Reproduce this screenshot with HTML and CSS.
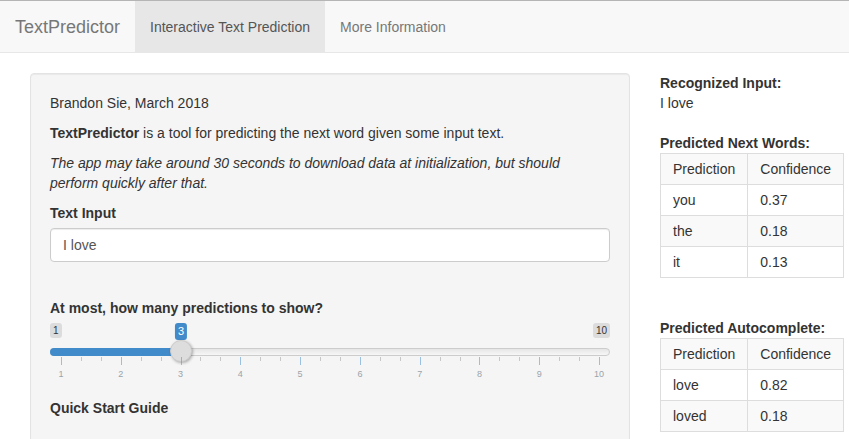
FILE: index.html
```html
<!DOCTYPE html>
<html lang="en">
<head>
<meta charset="utf-8">
<title>TextPredictor</title>
<link rel="stylesheet" href="styles.css">
</head>
<body>
<nav class="navbar">
  <span class="brand">TextPredictor</span>
  <ul class="nav">
    <li class="active"><a>Interactive Text Prediction</a></li>
    <li><a>More Information</a></li>
  </ul>
</nav>
<div class="main">
  <div class="well">
    <p>Brandon Sie, March 2018</p>
    <p><strong>TextPredictor</strong> is a tool for predicting the next word given some input text.</p>
    <p><em>The app may take around 30 seconds to download data at initialization, but should perform quickly after that.</em></p>
    <div class="form-group text-group">
      <label class="control-label">Text Input</label>
      <input class="form-control" type="text" value="I love">
    </div>
    <div class="form-group slider-group">
      <label class="control-label">At most, how many predictions to show?</label>
      <div class="irs">
        <span class="irs-line"></span>
        <span class="irs-bar" style="width:131px"></span>
        <span class="irs-min">1</span>
        <span class="irs-max">10</span>
        <span class="irs-single" style="left:131px">3</span>
        <span class="irs-handle" style="left:120px"></span>
        <div class="irs-grid">
          <span class="pol" style="left:0%"></span>
          <span class="pol small" style="left:3.704%"></span>
          <span class="pol small" style="left:7.407%"></span>
          <span class="pol" style="left:11.111%"></span>
          <span class="pol small" style="left:14.815%"></span>
          <span class="pol small" style="left:18.519%"></span>
          <span class="pol" style="left:22.222%"></span>
          <span class="pol small" style="left:25.926%"></span>
          <span class="pol small" style="left:29.630%"></span>
          <span class="pol" style="left:33.333%"></span>
          <span class="pol small" style="left:37.037%"></span>
          <span class="pol small" style="left:40.741%"></span>
          <span class="pol" style="left:44.444%"></span>
          <span class="pol small" style="left:48.148%"></span>
          <span class="pol small" style="left:51.852%"></span>
          <span class="pol" style="left:55.556%"></span>
          <span class="pol small" style="left:59.259%"></span>
          <span class="pol small" style="left:62.963%"></span>
          <span class="pol" style="left:66.667%"></span>
          <span class="pol small" style="left:70.370%"></span>
          <span class="pol small" style="left:74.074%"></span>
          <span class="pol" style="left:77.778%"></span>
          <span class="pol small" style="left:81.481%"></span>
          <span class="pol small" style="left:85.185%"></span>
          <span class="pol" style="left:88.889%"></span>
          <span class="pol small" style="left:92.593%"></span>
          <span class="pol small" style="left:96.296%"></span>
          <span class="pol" style="left:100%"></span>
          <span class="gtext" style="left:0%">1</span>
          <span class="gtext" style="left:11.111%">2</span>
          <span class="gtext" style="left:22.222%">3</span>
          <span class="gtext" style="left:33.333%">4</span>
          <span class="gtext" style="left:44.444%">5</span>
          <span class="gtext" style="left:55.556%">6</span>
          <span class="gtext" style="left:66.667%">7</span>
          <span class="gtext" style="left:77.778%">8</span>
          <span class="gtext" style="left:88.889%">9</span>
          <span class="gtext" style="left:100%">10</span>
        </div>
      </div>
    </div>
    <h5 class="guide">Quick Start Guide</h5>
  </div>
  <div class="results">
    <div class="res-label">Recognized Input:</div>
    <div class="res-value">I love</div>
    <div class="res-label table-head">Predicted Next Words:</div>
    <table class="ptable">
      <tr class="striped"><th>Prediction</th><th>Confidence</th></tr>
      <tr><td>you</td><td>0.37</td></tr>
      <tr class="striped"><td>the</td><td>0.18</td></tr>
      <tr><td>it</td><td>0.13</td></tr>
    </table>
    <div class="res-label table-head second">Predicted Autocomplete:</div>
    <table class="ptable">
      <tr class="striped"><th>Prediction</th><th>Confidence</th></tr>
      <tr><td>love</td><td>0.82</td></tr>
      <tr class="striped"><td>loved</td><td>0.18</td></tr>
    </table>
  </div>
</div>
</body>
</html>
```
FILE: styles.css
```css
html, body {
  overflow: hidden;
}
* { box-sizing: border-box; }
body {
  margin: 0;
  font-family: "Liberation Sans", Arial, Helvetica, sans-serif;
  font-size: 14px;
  line-height: 20px;
  color: #333;
  background: #fff;
  border-top: 1px solid #b5b5b5;
}
.navbar {
  display: flex;
  align-items: stretch;
  height: 52px;
  background: #f8f8f8;
  border-bottom: 1px solid #e7e7e7;
  margin-bottom: 20px;
}
.brand {
  font-size: 18px;
  line-height: 20px;
  color: #777;
  padding: 16px 15px 15px 15px;
  width: 135px;
}
.nav {
  display: flex;
  list-style: none;
  margin: 0;
  padding: 0;
}
.nav li a {
  display: block;
  height: 100%;
  padding: 16px 15px 15px;
  color: #777;
  line-height: 20px;
}
.nav li.active a {
  background: #e7e7e7;
  color: #555;
}
.main {
  display: grid;
  grid-template-columns: 600px 1fr;
  column-gap: 30px;
  padding-left: 30px;
}
.well {
  background: #f5f5f5;
  border: 1px solid #e3e3e3;
  border-radius: 4px;
  padding: 19px;
  min-height: 500px;
  box-shadow: inset 0 1px 1px rgba(0,0,0,.05);
}
.well p {
  margin: 0 0 10px;
}
.control-label {
  display: block;
  font-weight: bold;
  margin-bottom: 5px;
}
.text-group {
  margin-bottom: 36px;
}
.form-control {
  display: block;
  width: 100%;
  height: 34px;
  padding: 6px 12px;
  font-family: inherit;
  font-size: 14px;
  line-height: 20px;
  color: #555;
  background: #fff;
  border: 1px solid #ccc;
  border-radius: 4px;
  box-shadow: inset 0 1px 1px rgba(0,0,0,.075);
}
.slider-group {
  margin-bottom: 15px;
}
.irs {
  position: relative;
  height: 60px;
}
.irs-line {
  position: absolute;
  left: 0;
  right: 0;
  top: 25px;
  height: 8px;
  border: 1px solid #ccc;
  border-radius: 16px;
  background: linear-gradient(to bottom, #ddd -50%, #fff 150%);
}
.irs-bar {
  position: absolute;
  left: 0;
  top: 25px;
  height: 8px;
  background: #428bca;
  border-radius: 8px 0 0 8px;
}
.irs-handle {
  position: absolute;
  top: 17px;
  width: 22px;
  height: 22px;
  background: #ddd;
  border: 1px solid #ccc;
  border-radius: 50%;
  box-shadow: 1px 1px 3px rgba(0,0,0,.3);
}
.irs-min, .irs-max, .irs-single {
  position: absolute;
  top: 0;
  padding: 1px 3px;
  border-radius: 3px;
  line-height: 1.333;
}
.irs-min, .irs-max {
  font-size: 10px;
  color: #333;
  background: rgba(0,0,0,.1);
}
.irs-min { left: 0; }
.irs-max { right: 0; }
.irs-single {
  font-size: 11px;
  color: #fff;
  background: #428bca;
  transform: translateX(-50%);
}
.irs-grid {
  position: absolute;
  left: 11px;
  width: 538px;
  top: 34px;
  height: 26px;
}
.pol {
  position: absolute;
  top: 0;
  width: 1px;
  height: 8px;
  background: rgba(66,139,202,.5);
}
.pol.small {
  height: 4px;
  background: rgba(153,153,153,.5);
}
.gtext {
  position: absolute;
  top: 13px;
  font-size: 9px;
  line-height: 9px;
  color: #99a4ac;
  transform: translateX(-50%);
  white-space: nowrap;
}
.guide {
  font-size: 14px;
  font-weight: bold;
  line-height: 20px;
  margin: 0 0 10px;
}
.res-label {
  font-weight: bold;
}
.table-head {
  margin-top: 20px;
}
.table-head.second {
  margin-top: 40px;
}
.ptable {
  border-collapse: collapse;
  border: 1px solid #ddd;
}
.ptable th, .ptable td {
  font-weight: normal;
  text-align: left;
  padding: 5px 12px;
  line-height: 20px;
  border: 1px solid #ddd;
}
.ptable tr.striped {
  background: #f9f9f9;
}
```
